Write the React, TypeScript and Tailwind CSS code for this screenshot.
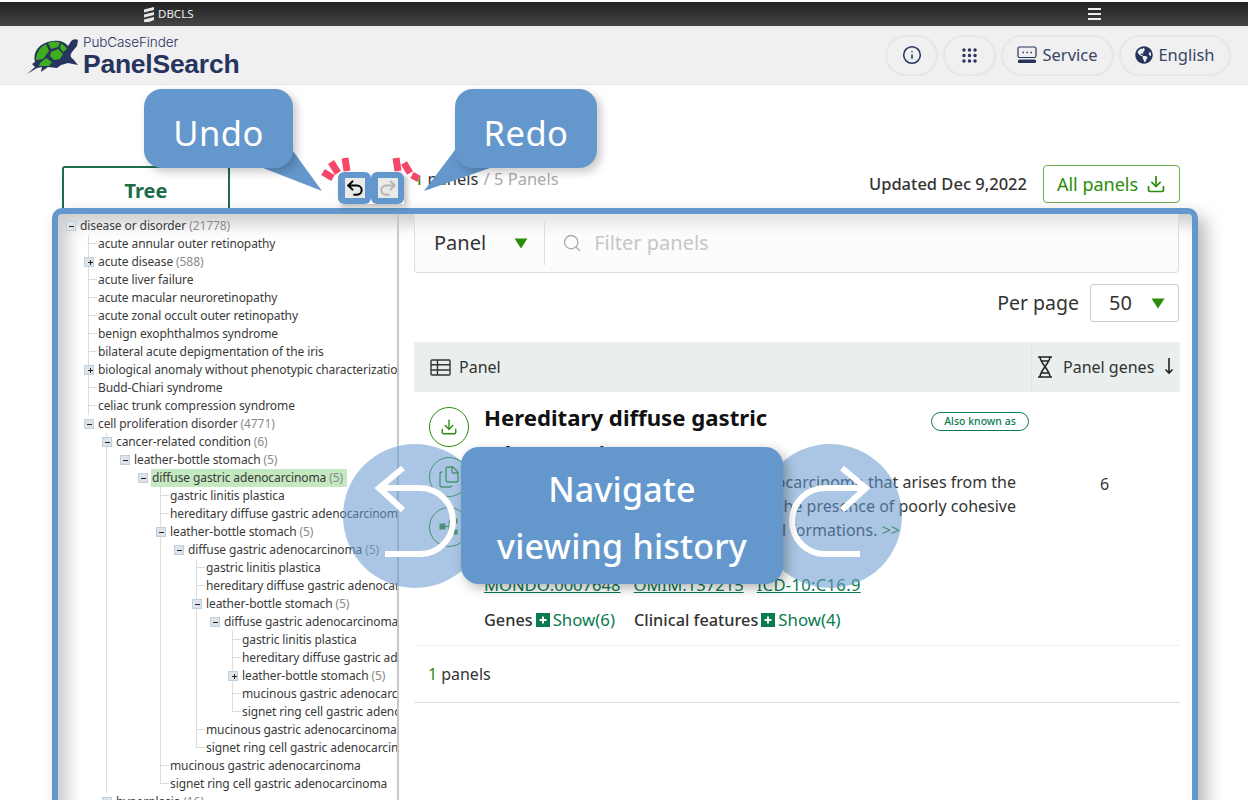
import React from "react";
import { Info, Grip, Download, Files, Search, Undo2, Redo2 } from "lucide-react";
import { FaGlobeAmericas } from "react-icons/fa";

type Node = { t: string; n?: number; open?: boolean; hl?: boolean; c?: Node[] };
const leaves = (...a: string[]): Node[] => a.map((t) => ({ t }));
const sub = (last: Node[]): Node[] => [
  { t: "gastric linitis plastica" },
  { t: "hereditary diffuse gastric adenocarcinoma" },
  { t: "leather-bottle stomach", n: 5, open: last.length > 0, c: last },
  { t: "mucinous gastric adenocarcinoma" },
  { t: "signet ring cell gastric adenocarcinoma" },
];
const tree: Node = {
  t: "disease or disorder", n: 21778, open: true,
  c: [
    { t: "acute annular outer retinopathy" },
    { t: "acute disease", n: 588 },
    ...leaves("acute liver failure", "acute macular neuroretinopathy", "acute zonal occult outer retinopathy", "benign exophthalmos syndrome", "bilateral acute depigmentation of the iris"),
    { t: "biological anomaly without phenotypic characterization", c: [] },
    ...leaves("Budd-Chiari syndrome", "celiac trunk compression syndrome"),
    {
      t: "cell proliferation disorder", n: 4771, open: true,
      c: [
        {
          t: "cancer-related condition", n: 6, open: true,
          c: [{
            t: "leather-bottle stomach", n: 5, open: true,
            c: [{
              t: "diffuse gastric adenocarcinoma", n: 5, open: true, hl: true,
              c: sub([{
                t: "diffuse gastric adenocarcinoma", n: 5, open: true,
                c: sub([{ t: "diffuse gastric adenocarcinoma", n: 5, open: true, c: sub([]) }]),
              }]),
            }],
          }],
        },
        { t: "hyperplasia", n: 16, open: true },
      ],
    },
  ],
};

function Toggle({ open }: { open?: boolean }) {
  return (
    <span className="relative z-10 flex h-[10px] w-[10px] shrink-0 items-center justify-center border border-[#bcd0e4] bg-[#dfe3e8]">
      <span className="flex h-[5px] w-[5px] items-center justify-center">
        <span className="h-px w-[5px] bg-[#222]" />
        {!open && <span className="-ml-[3px] h-[5px] w-px bg-[#222]" />}
      </span>
    </span>
  );
}

function Row({ node, root, last }: { node: Node; root?: boolean; last?: boolean }) {
  const hasKids = node.n !== undefined || node.c !== undefined;
  return (
    <div className="flex h-[18px] items-center whitespace-nowrap">
      {root ? (
        <span className="-ml-[14px] mr-[4px] shrink-0"><Toggle open={node.open} /></span>
      ) : hasKids ? (
        <span className="-ml-[5px] mr-[4px] shrink-0"><Toggle open={node.open} /></span>
      ) : (
        <span className={`mr-px h-[9px] shrink-0 self-start border-b border-[#dcdcdc] ${last ? "-ml-px w-[9px] border-l" : "w-[8px]"}`} />
      )}
      <span className={`shrink-0 ${node.hl ? "-ml-px bg-[#c4e8c0] pl-px pr-[4px] leading-[18px]" : ""}`}>
        {node.t}
        {node.n !== undefined && <span className="text-[#8a8a8a]"> ({node.n})</span>}
      </span>
    </div>
  );
}

function Branch({ node, root, last }: { node: Node; root?: boolean; last?: boolean }) {
  const kids = node.open ? node.c ?? [] : [];
  return (
    <div>
      <Row node={node} root={root} last={last} />
      {kids.length > 0 && (
        <div className={root ? "ml-[8px]" : "ml-[17px]"}>
          {kids.map((k, i) => {
            const isLast = i === kids.length - 1;
            return (
              <div key={i} className={`border-l ${isLast ? "border-transparent" : "border-[#dcdcdc]"}`}>
                <Branch node={k} last={isLast} />
              </div>
            );
          })}
        </div>
      )}
    </div>
  );
}

function Tri() {
  return (
    <svg width="14" height="11" viewBox="0 0 14 11" className="shrink-0"><path d="M0.5 0.5H13.5L7 10.5Z" fill="#2a8c0a" /></svg>
  );
}

function Pill({ className, children }: { className: string; children: React.ReactNode }) {
  return (
    <div className={`flex h-[41px] items-center justify-center gap-[5px] rounded-full border-2 border-[#e6e6e6] ${className}`}>{children}</div>
  );
}

function RoundBtn({ children }: { children: React.ReactNode }) {
  return (
    <div className="flex h-[40px] w-[40px] items-center justify-center rounded-full border border-[#2a8c0a] text-[#2a8c0a]">{children}</div>
  );
}

function PlusBox() {
  return (
    <span className="mx-[3px] flex h-[14px] w-[14px] items-center justify-center bg-[#0a7a50]">
      <svg width="10" height="10" viewBox="0 0 10 10"><path d="M5 1.500V8.500M1.500 5H8.500" stroke="#fff" strokeWidth="2" /></svg>
    </span>
  );
}

export default function App() {
  return (
    <div className="relative h-[800px] w-[1248px] overflow-hidden bg-white font-['Noto_Sans',sans-serif] text-[#333]">
      {/* top bar */}
      <div className="mt-[2px] flex h-[24px] items-center bg-gradient-to-b from-[#222] to-[#454545] pl-[143px] pr-[147px] text-white">
        <svg width="12" height="17" viewBox="0 0 12 17">
          <path d="M1 3.500 11 1V4L1 6.500ZM1 8.500 11 6V9L1 11.500ZM1 13.500 11 11V14L6 16H1Z" fill="#e8e8e8" />
        </svg>
        <span className="ml-[3px] mt-[-1px] text-[11.5px] leading-none text-[#eee]">DBCLS</span>
        <div className="ml-auto flex w-[13px] flex-col gap-[3px]">
          <span className="h-[2px] bg-[#eee]" /><span className="h-[2px] bg-[#eee]" /><span className="h-[2px] bg-[#eee]" />
        </div>
      </div>

      {/* header */}
      <header className="flex h-[59px] items-center border-b border-[#e8e8e8] bg-[#f0f0f0] pl-[27px] pr-[17px]">
        <svg width="52" height="36" viewBox="0 0 52 36" className="mt-[3px] shrink-0">
          <path d="M0 35 8 28 5 25 8 23C5 12 14 3 26 2 33 1 38 3 41 7L43 4C44 1 48 -1 51 1L50 7 45 13C43 16 43 18 46 20L51 26 41 24 34 26 30 29 21 28 14 33 15 28 10 29Z" fill="#27345e" />
          <path d="M9 21C9 14 13 8 19 5L22 12 16 20Z" fill="#3fae1e" />
          <path d="M21 4C25 2.500 30 2.500 33 3.500L31 8 24 10Z" fill="#3fae1e" />
          <path d="M34 4.500C37 6 39 8 40 10L36 13 33 9Z" fill="#3fae1e" />
          <path d="M24 13 31 10 36 15 33 20 27 21 23 17Z" fill="#3fae1e" />
          <path d="M13 24 19 19 25 23 22 27 12 27Z" fill="#3fae1e" />
        </svg>
        <div className="ml-[4px] flex flex-col font-['Liberation_Sans',sans-serif] text-[#27345e]">
          <span className="mt-[2px] font-['Inter',sans-serif] text-[13.5px] leading-[16px] font-light tracking-[-0.1px]">PubCaseFinder</span>
          <span className="text-[26.5px] leading-[28px] font-bold tracking-[-0.25px]">PanelSearch</span>
        </div>
        <nav className="ml-auto flex gap-[5px] text-[16.5px] text-[#3a4566]">
          <Pill className="w-[53px]"><Info size={20} strokeWidth={1.8} className="text-[#27345e]" /></Pill>
          <Pill className="w-[53px]"><Grip size={19} strokeWidth={2.4} className="text-[#27345e]" /></Pill>
          <Pill className="w-[113px]">
            <svg width="20" height="18" viewBox="0 0 20 18" fill="none" stroke="#27345e" strokeWidth="1.200">
              <rect x="1" y="1" width="18" height="10.500" rx="1.500" />
              <path d="M5.500 6.500H7M9.500 6.500H11M13.500 6.500H15" strokeWidth="1.400" />
              <rect x="1.500" y="14" width="17" height="2.500" rx="1" fill="#27345e" />
            </svg>
            Service
          </Pill>
          <Pill className="w-[112px]"><FaGlobeAmericas size={18} className="text-[#27345e]" />English</Pill>
        </nav>
      </header>

      {/* toolbar row */}
      <div className="mt-[81px] flex h-[42px] pl-[62px] pr-[68px]">
        <div className="flex h-[44px] w-[168px] items-center justify-center rounded-t-[3px] border-2 border-b-0 border-[#1f6b4a] pt-[4px] text-[20px] font-bold text-[#1f6b4a]">Tree</div>
        <div className="ml-[184px] flex h-[26px] items-center text-[16.5px]">
          <span className="font-medium text-[#2a8c0a]">1</span>
          <span className="ml-[4px]">panels</span>
          <span className="ml-[5px] text-[#aaa]">/ 5 Panels</span>
        </div>
        <div className="ml-auto flex h-[36px] items-center gap-[16px]">
          <span className="text-[16.5px] font-medium">Updated Dec 9,2022</span>
          <div className="flex h-[38px] w-[137px] items-center justify-center gap-[8px] rounded-[4px] border border-[#6ab04c] text-[18px] text-[#2a8c0a]">
            All panels <Download size={20} strokeWidth={2} />
          </div>
        </div>
      </div>

      {/* highlighted frame */}
      <main className="relative ml-[52px] flex h-[620px] w-[1146px] overflow-hidden rounded-[10px] border-[6px] border-[#6498cd] shadow-[8px_8px_18px_rgba(0,0,0,0.28),inset_10px_10px_16px_rgba(0,0,0,0.2)]">
        <section className="h-full w-[341px] shrink-0 overflow-hidden border-r-2 border-[#c8c8c8] pl-[22px] pt-[3px] text-[12px] tracking-[-0.1px] text-[#3a3a3a]">
          <Branch node={tree} root />
        </section>

        <section className="min-w-0 flex-1 pl-[15px] pr-[13px]">
          <div className="flex h-[59px] items-center rounded-b-[4px] border border-t-0 border-[#dcdcdc] bg-[#fafafa]/50 text-[20px]">
            <span className="ml-[19px]">Panel</span>
            <span className="ml-[28px]"><Tri /></span>
            <span className="ml-[16px] h-[44px] w-px bg-[#ddd]" />
            <Search size={20} strokeWidth={1.6} className="ml-[17px] text-[#aaa]" />
            <span className="ml-[12px] text-[#c6c6c6]">Filter panels</span>
          </div>

          <div className="mt-[11px] flex h-[38px] items-center justify-end gap-[11px] text-[19.5px]">
            <span>Per page</span>
            <div className="flex h-[38px] w-[89px] items-center justify-between rounded-[3px] border border-[#ccc] pl-[18px] pr-[13px] text-[20px]">
              50 <Tri />
            </div>
          </div>

          <div className="mt-[20px] flex h-[50px] w-[766px] items-center bg-[#e9efec] text-[16px]">
            <svg width="21" height="17" viewBox="0 0 21 17" fill="none" stroke="#333" strokeWidth="1.400" className="ml-[16px]">
              <rect x="1" y="1" width="19" height="15" rx="1" /><path d="M1 5.800H20M1 11H20M7.500 1V16" />
            </svg>
            <span className="ml-[8px]">Panel</span>
            <div className="ml-auto flex h-full w-[149px] items-center border-l border-[#dfe5e2] pl-[5px]">
              <svg width="16" height="22" viewBox="0 0 16 22" fill="none" stroke="#222" strokeWidth="1.500">
                <path d="M1 1H15M1 21H15M3 1C3 7 13 14 13 21M13 1C13 7 3 14 3 21M4 5H12M4 17H12" />
              </svg>
              <span className="ml-[10px]">Panel genes</span>
              <svg width="10" height="18" viewBox="0 0 10 18" fill="none" stroke="#222" strokeWidth="1.600" className="ml-[10px] mt-[-2px]">
                <path d="M5 1V16M1.500 12.500 5 16 8.500 12.500" />
              </svg>
            </div>
          </div>

          <div className="flex h-[254px] w-[766px] border-b border-[#f0f0f0] pl-[15px]">
            <div className="flex flex-col gap-[10px] pt-[15px]">
              <RoundBtn><Download size={18} strokeWidth={1.8} /></RoundBtn>
              <RoundBtn><Files size={24} strokeWidth={1.3} /></RoundBtn>
              <RoundBtn>
                <svg width="20" height="20" viewBox="0 0 20 20" fill="#2a8c0a" stroke="#2a8c0a"><rect x="1" y="7" width="5" height="5" /><path d="M6 9.500H10V4H14M10 9.500V15H14" fill="none" /><rect x="14" y="2" width="4" height="4" /><rect x="14" y="13" width="4" height="4" /></svg>
              </RoundBtn>
            </div>
            <div className="ml-[15px] w-[532px] shrink-0">
              <h2 className="w-[320px] pt-[8px] text-[22.2px] leading-[36px] font-bold text-[#111]">Hereditary diffuse gastric adenocarcinoma</h2>
              <div className="mt-[-2px] text-[16px] leading-[24px]">
                <p className="whitespace-nowrap text-right">A hereditary type of gastric adenocarcinoma that arises from the</p>
                <p className="whitespace-nowrap text-right">stomach and is marked by the presence of poorly cohesive</p>
                <p className="whitespace-nowrap pl-[6px]">cells in diffuse infiltrative or other small formations. <span className="text-[#2a8c0a]">&gt;&gt;</span></p>
              </div>
              <div className="mt-[31px] flex gap-[13px] text-[16.6px] leading-[24px] text-[#0a7a50] underline">
                <span>MONDO:0007648</span><span>OMIM:137215</span><span className="tracking-[0.3px]">ICD-10:C16.9</span>
              </div>
              <div className="mt-[11px] flex items-center text-[16.3px] font-medium leading-[24px]">
                <span>Genes</span><PlusBox /><span className="text-[16.8px] font-normal text-[#0a7a50]">Show(6)</span>
                <span className="ml-[19px]">Clinical features</span><PlusBox /><span className="text-[16.8px] font-normal text-[#0a7a50]">Show(4)</span>
              </div>
            </div>
            <div className="flex-1 text-center">
              <div className="ml-[-85px] mt-[20px] flex h-[19px] w-[98px] items-center justify-center whitespace-nowrap rounded-full border border-[#0a7a50] text-[10.500px] font-medium text-[#0a7a50]">Also known as</div>
              <div className="mt-[41px] pl-[13px] text-[16px]">6</div>
            </div>
          </div>

          <div className="flex h-[57px] w-[766px] items-center border-b border-[#ddd] pl-[14px] text-[16px]">
            <span className="text-[#2a8c0a]">1</span><span className="ml-[4px]">panels</span>
          </div>
        </section>
      </main>

      {/* translucent history circles */}
      <div className="absolute left-[343px] top-[444px] h-[144px] w-[144px] rounded-full bg-[#6498cd]/55" />
      <div className="absolute left-[758px] top-[444px] h-[144px] w-[144px] rounded-full bg-[#6498cd]/55" />
      <svg className="absolute left-[370px] top-[460px]" width="90" height="100" viewBox="0 0 90 100" fill="none" stroke="#fff" strokeWidth="6">
        <path d="M33 8 9 28 33 50M9 28H50A33 33 0 0 1 50 94H15" />
      </svg>
      <svg className="absolute left-[785px] top-[460px]" width="90" height="100" viewBox="0 0 90 100" fill="none" stroke="#fff" strokeWidth="6">
        <path d="M57 8 81 28 57 50M81 28H40A33 33 0 0 0 40 94H75" />
      </svg>

      {/* navigate bubble */}
      <div className="absolute left-[461px] top-[447px] flex h-[137px] w-[322px] flex-col items-center justify-center rounded-[18px] bg-[#6498cd] pt-[4px] text-center text-[34px] font-medium leading-[57px] tracking-[0.2px] text-white shadow-[4px_4px_12px_rgba(0,0,0,0.3)]">
        <span>Navigate</span>
        <span>viewing history</span>
      </div>

      {/* undo / redo bubbles */}
      <svg className="absolute left-[220px] top-[150px]" width="300" height="50" viewBox="0 0 300 50">
        <path d="M73 1 102 41 43 18Z" fill="#6498cd" />
        <path d="M204 41 235 0H270V18Z" fill="#6498cd" />
      </svg>
      <div className="absolute left-[144px] top-[89px] flex h-[79px] w-[149px] items-center justify-center rounded-[18px] bg-[#6498cd] pt-[8px] text-[34.5px] tracking-[0.5px] text-white shadow-[4px_4px_10px_rgba(0,0,0,0.22)]">Undo</div>
      <div className="absolute left-[455px] top-[89px] flex h-[79px] w-[142px] items-center justify-center rounded-[18px] bg-[#6498cd] pt-[8px] text-[34.5px] tracking-[0.5px] text-white shadow-[4px_4px_10px_rgba(0,0,0,0.22)]">Redo</div>

      {/* undo / redo buttons */}
      <div className="absolute left-[338px] top-[172px] flex shadow-[3px_3px_6px_rgba(0,0,0,0.25)]">
        <div className="flex h-[32px] w-[33px] items-center justify-center rounded-[6px] bg-[#6498cd]">
          <div className="flex h-[20px] w-[20px] items-center justify-center bg-[#e9e9e9]"><Undo2 size={20} strokeWidth={2.4} className="text-black" /></div>
        </div>
        <div className="flex h-[32px] w-[33px] items-center justify-center rounded-[6px] bg-[#6498cd]">
          <div className="flex h-[20px] w-[20px] items-center justify-center bg-[#e9e9e9]"><Redo2 size={20} strokeWidth={2.4} className="text-[#b5b5b5]" /></div>
        </div>
      </div>

      {/* sparks */}
      <svg className="absolute left-[315px] top-[148px]" width="112" height="44" viewBox="0 0 112 44" fill="none">
        <g stroke="#fff" strokeWidth="11">
          <path d="M8 24 18 30M16 14 23 25M30 10 32 23M81 10 83 23M89 15 96 26M96 26 104 31" />
        </g>
        <path d="M8 24 18 30" stroke="#f5476a" strokeWidth="7" />
        <path d="M16 14 23 25" stroke="#f5476a" strokeWidth="7" />
        <path d="M30 10 32 23" stroke="#f5476a" strokeWidth="7" />
        <path d="M81 10 83 23" stroke="#f5476a" strokeWidth="7" />
        <path d="M89 15 95 25" stroke="#f5476a" strokeWidth="7" />
        <path d="M97 27 104 31" stroke="#f5476a" strokeWidth="7" />
      </svg>
    </div>
  );
}
